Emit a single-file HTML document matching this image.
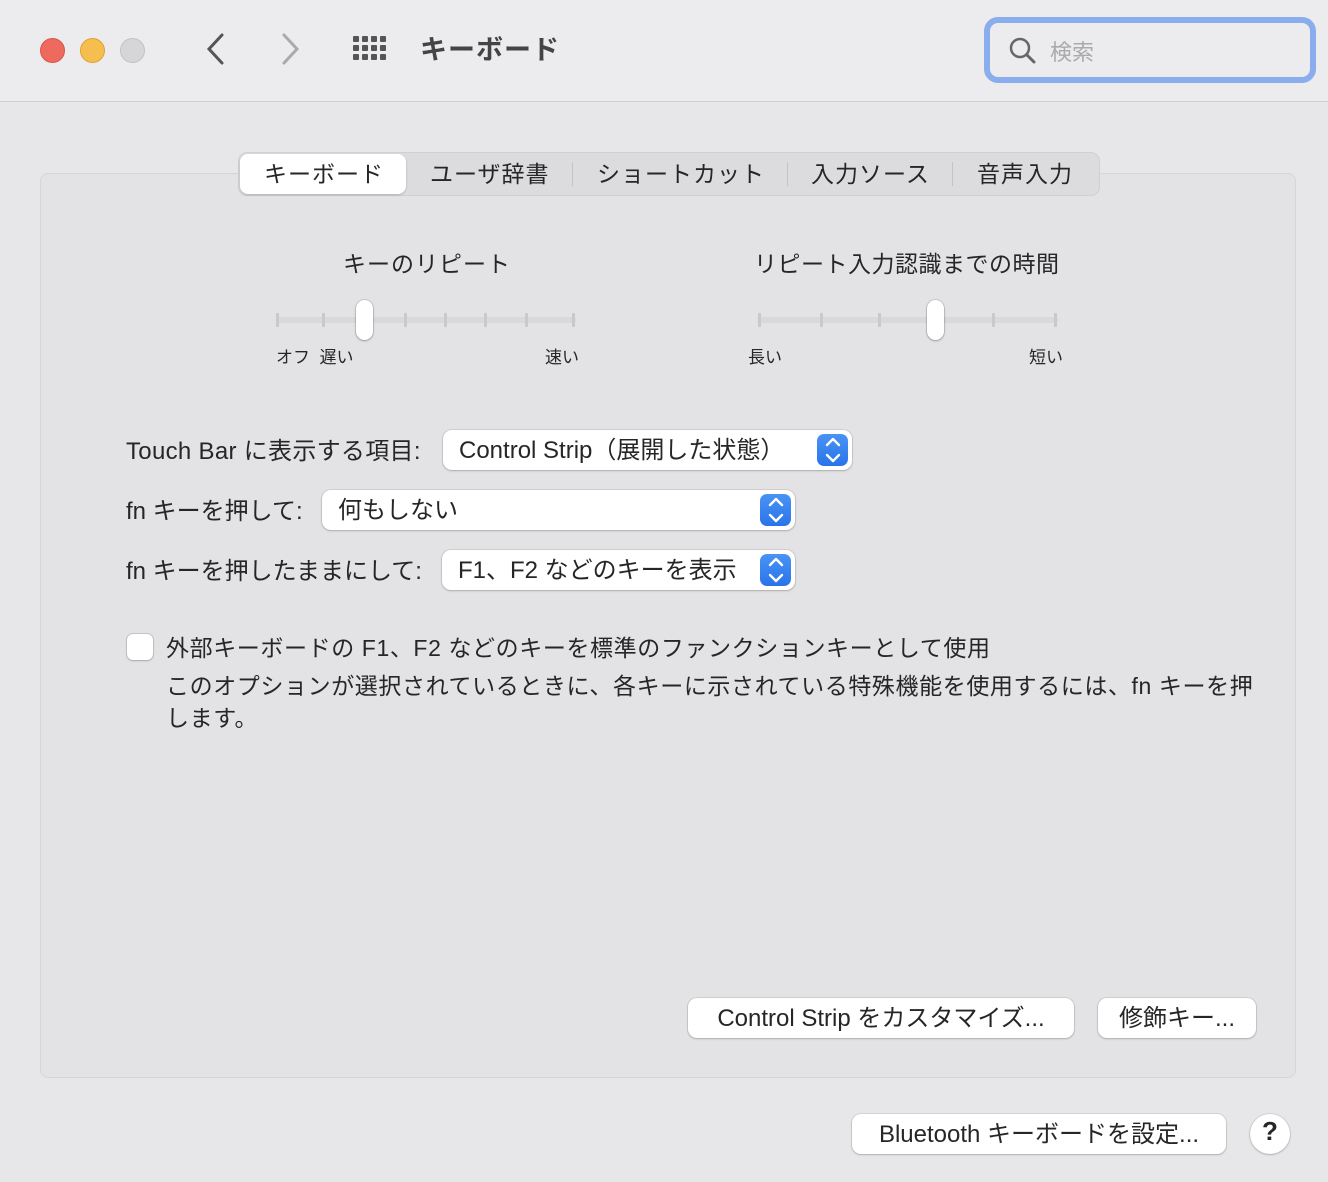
<!DOCTYPE html>
<html><head><meta charset="utf-8"><style>
*{margin:0;padding:0;box-sizing:border-box}
body{width:1328px;height:1182px;background:#e7e7e9;font-family:"Liberation Sans","Noto Sans CJK JP",sans-serif;color:#262626;position:relative;overflow:hidden}
.a{position:absolute}
.t{font-size:23px;white-space:nowrap}
.btn{position:absolute;background:#fff;border-radius:9px;box-shadow:0 0 0 1px rgba(0,0,0,.08),0 1px 2px rgba(0,0,0,.18);font-size:24px;display:flex;align-items:center;justify-content:center;white-space:nowrap;padding-bottom:5px}
.pop{position:absolute;background:#fff;border-radius:9px;box-shadow:0 0 0 1px rgba(0,0,0,.08),0 1px 2px rgba(0,0,0,.18);font-size:24px;display:flex;align-items:center;padding-left:16px;white-space:nowrap;padding-bottom:5px}
.st{position:absolute;right:4px;top:4px;width:31px;height:32px;border-radius:7px;background:linear-gradient(#4a94f5,#2a74ea)}
.tick{position:absolute;width:3px;height:14px;background:#c9c9cb;border-radius:1px;top:313px}
.track{position:absolute;height:6px;background:#d9d9db;border-radius:3px;top:317px}
.thumb{position:absolute;width:17px;height:40px;background:#fff;border-radius:9px;top:300px;box-shadow:0 0 0 1px rgba(0,0,0,.1),0 1px 2px rgba(0,0,0,.25)}
.s{font-size:17px;white-space:nowrap}
</style></head><body>
<div class="a" style="left:0;top:0;width:1328px;height:102px;background:#ececee;border-bottom:1px solid #cfcfd1"></div>
<div class="a" style="left:40px;top:38px;width:25px;height:25px;border-radius:50%;background:#ee6a5f;border:1px solid #d8554b"></div>
<div class="a" style="left:80px;top:38px;width:25px;height:25px;border-radius:50%;background:#f6be4f;border:1px solid #dea236"></div>
<div class="a" style="left:120px;top:38px;width:25px;height:25px;border-radius:50%;background:#d6d6d8;border:1px solid #c2c2c4"></div>
<svg class="a" style="left:200px;top:30px" width="110" height="40"><path d="M22 5 L9 19 L22 33" fill="none" stroke="#555" stroke-width="3" stroke-linecap="round"/><path d="M84 5 L97 19 L84 33" fill="none" stroke="#aaa" stroke-width="3" stroke-linecap="round"/></svg>
<svg class="a" style="left:352px;top:35px" width="40" height="30"><g fill="#555">
<rect x="1" y="1" width="6" height="6" rx="1"/><rect x="10" y="1" width="6" height="6" rx="1"/><rect x="19" y="1" width="6" height="6" rx="1"/><rect x="28" y="1" width="6" height="6" rx="1"/>
<rect x="1" y="10" width="6" height="6" rx="1"/><rect x="10" y="10" width="6" height="6" rx="1"/><rect x="19" y="10" width="6" height="6" rx="1"/><rect x="28" y="10" width="6" height="6" rx="1"/>
<rect x="1" y="19" width="6" height="6" rx="1"/><rect x="10" y="19" width="6" height="6" rx="1"/><rect x="19" y="19" width="6" height="6" rx="1"/><rect x="28" y="19" width="6" height="6" rx="1"/></g></svg>
<div class="a" style="left:420px;top:28px;font-size:27px;font-weight:bold;color:#444;letter-spacing:1px">キーボード</div>
<div class="a" style="left:984px;top:17px;width:332px;height:66px;border:6px solid #8aadee;border-radius:14px;background:#ececee"></div>
<svg class="a" style="left:1008px;top:36px" width="30" height="30"><circle cx="12" cy="12" r="9" fill="none" stroke="#666" stroke-width="2.5"/><path d="M19 19 L26 26" stroke="#666" stroke-width="3" stroke-linecap="round"/></svg>
<div class="a" style="left:1050px;top:35px;font-size:22px;color:#aaa">検索</div>

<div class="a" style="left:40px;top:173px;width:1256px;height:905px;background:#e3e3e5;border:1px solid #d6d6d8;border-radius:8px"></div>
<div class="a" style="left:238px;top:152px;width:862px;height:44px;background:#dcdcde;border-radius:9px;border:1px solid #d0d0d2"></div>
<div class="a" style="left:240px;top:154px;width:166px;height:40px;background:#fff;border-radius:8px;box-shadow:0 1px 2px rgba(0,0,0,.2)"></div>
<div class="a t" style="left:264px;top:155px;letter-spacing:1px">キーボード</div>
<div class="a t" style="left:430px;top:155px;letter-spacing:1px">ユーザ辞書</div>
<div class="a" style="left:572px;top:162px;width:1px;height:24px;background:#c4c4c6"></div>
<div class="a t" style="left:597px;top:155px;letter-spacing:1px">ショートカット</div>
<div class="a" style="left:787px;top:162px;width:1px;height:24px;background:#c4c4c6"></div>
<div class="a t" style="left:811px;top:155px;letter-spacing:1px">入力ソース</div>
<div class="a" style="left:952px;top:162px;width:1px;height:24px;background:#c4c4c6"></div>
<div class="a t" style="left:977px;top:155px;letter-spacing:1px">音声入力</div>

<div class="a t" style="left:343px;top:245px;letter-spacing:1px">キーのリピート</div>
<div class="a t" style="left:754px;top:245px;letter-spacing:0.5px">リピート入力認識までの時間</div>
<div class="track" style="left:277px;width:299px"></div>
<div class="tick" style="left:276px"></div><div class="tick" style="left:322px"></div><div class="tick" style="left:404px"></div><div class="tick" style="left:444px"></div><div class="tick" style="left:484px"></div><div class="tick" style="left:525px"></div><div class="tick" style="left:572px"></div>
<div class="thumb" style="left:356px"></div>
<div class="track" style="left:759px;width:299px"></div>
<div class="tick" style="left:758px"></div><div class="tick" style="left:820px"></div><div class="tick" style="left:878px"></div><div class="tick" style="left:992px"></div><div class="tick" style="left:1054px"></div>
<div class="thumb" style="left:927px"></div>
<div class="a s" style="left:276px;top:343px">オフ&nbsp;&nbsp;遅い</div>
<div class="a s" style="left:545px;top:343px">速い</div>
<div class="a s" style="left:748px;top:343px">長い</div>
<div class="a s" style="left:1029px;top:343px">短い</div>

<div class="a t" style="left:126px;top:431px;font-size:24px;letter-spacing:0.3px">Touch Bar に表示する項目:</div>
<div class="pop" style="left:443px;top:430px;width:409px;height:40px">Control Strip（展開した状態）<div class="st"></div></div>
<div class="a t" style="left:126px;top:491px;font-size:24px">fn キーを押して:</div>
<div class="pop" style="left:322px;top:490px;width:473px;height:40px">何もしない<div class="st"></div></div>
<div class="a t" style="left:126px;top:551px;font-size:24px">fn キーを押したままにして:</div>
<div class="pop" style="left:442px;top:550px;width:353px;height:40px">F1、F2 などのキーを表示<div class="st"></div></div>
<svg class="a" style="left:0;top:0" width="1328" height="600"><g fill="none" stroke="#fff" stroke-width="2.4" stroke-linecap="round" stroke-linejoin="round">
<path d="M827 445 L833 439 L839 445 M827 455 L833 461 L839 455"/>
<path d="M770 505 L776 499 L782 505 M770 515 L776 521 L782 515"/>
<path d="M770 565 L776 559 L782 565 M770 575 L776 581 L782 575"/></g></svg>

<div class="a" style="left:127px;top:634px;width:26px;height:26px;background:#fff;border-radius:6px;box-shadow:0 0 0 1px rgba(0,0,0,.12),0 1px 2px rgba(0,0,0,.15)"></div>
<div class="a t" style="left:166px;top:629px;letter-spacing:0.6px">外部キーボードの F1、F2 などのキーを標準のファンクションキーとして使用</div>
<div class="a t" style="left:166px;top:670px;line-height:32px;width:1095px;white-space:normal;letter-spacing:0.6px">このオプションが選択されているときに、各キーに示されている特殊機能を使用するには、fn キーを押します。</div>

<div class="btn" style="left:688px;top:998px;width:386px;height:40px">Control Strip をカスタマイズ...</div>
<div class="btn" style="left:1098px;top:998px;width:158px;height:40px">修飾キー...</div>
<div class="btn" style="left:852px;top:1114px;width:374px;height:40px">Bluetooth キーボードを設定...</div>
<div class="btn" style="left:1250px;top:1114px;width:40px;height:40px;border-radius:50%;font-size:26px;font-weight:bold">?</div>
</body></html>
